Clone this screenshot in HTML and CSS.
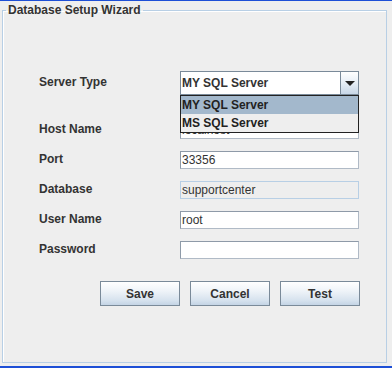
FILE: index.html
```html
<!DOCTYPE html>
<html lang="en">
<head>
    <meta charset="UTF-8">
    <meta name="viewport" content="width=device-width, initial-scale=1.0">
    <link rel="stylesheet" href="styles.css">
    <title>Database Setup Wizard</title>
</head>
<body>

<div class="window">
    <fieldset class="wizard">
        <legend>Database Setup Wizard</legend>

        <div class="form">
            <div class="row row-first">
                <label>Server Type</label>
                <div class="combo">
                    <div class="combo-box">
                        <span class="combo-value">MY SQL Server</span>
                        <span class="combo-btn">
                            <svg width="10" height="5" viewBox="0 0 10 5"><path d="M0 0 H10 L5 5 Z" fill="#222"/></svg>
                        </span>
                    </div>
                    <ul class="combo-list">
                        <li class="selected">MY SQL Server</li>
                        <li>MS SQL Server</li>
                    </ul>
                </div>
            </div>
            <div class="row">
                <label>Host Name</label>
                <input type="text" class="field" value="localhost">
            </div>
            <div class="row">
                <label>Port</label>
                <input type="text" class="field" value="33356">
            </div>
            <div class="row">
                <label>Database</label>
                <input type="text" class="field readonly" value="supportcenter" readonly>
            </div>
            <div class="row">
                <label>User Name</label>
                <input type="text" class="field" value="root">
            </div>
            <div class="row">
                <label>Password</label>
                <input type="password" class="field" value="">
            </div>
        </div>

        <div class="buttons">
            <button>Save</button>
            <button>Cancel</button>
            <button>Test</button>
        </div>
    </fieldset>
</div>

</body>
</html>
```

FILE: styles.css
```css
* {
    box-sizing: border-box;
}

html, body {
    height: 100%;
}

body {
    margin: 0;
    font-family: "Liberation Sans", Arial, sans-serif;
    font-size: 12px;
    color: #333333;
    background-color: #eeeeee;
}

.window {
    height: 100%;
    border-top: 1px solid #1d4fd6;
    border-bottom: 2px solid #1d4fd6;
    padding: 2px 5px 3px 2px;
    display: flex;
}

.wizard {
    flex: 1;
    margin: 0;
    padding: 0;
    border: 1px solid #b8cfe5;
    box-shadow: inset 1px 1px 0 #ffffff;
    min-width: 0;
}

.wizard legend {
    margin-left: 3px;
    padding: 0 2px;
    font-weight: bold;
    line-height: 14px;
    color: #333333;
}

.form {
    padding: 54px 0 0 36px;
}

.row {
    display: flex;
    align-items: center;
    margin-bottom: 12px;
}

.row-first {
    margin-bottom: 26px;
}

.row label {
    width: 141px;
    font-weight: bold;
    line-height: 14px;
    padding-bottom: 3px;
}

.field {
    width: 179px;
    height: 18px;
    margin: 0;
    padding: 0 1px;
    border: 1px solid #8e9aa8;
    border-right-color: #b0bac6;
    border-bottom-color: #b0bac6;
    background-color: #ffffff;
    font-family: "Liberation Sans", Arial, sans-serif;
    font-size: 12px;
    color: #333333;
    outline: none;
}

.field.readonly {
    background-color: #eeeeee;
    border-color: #b8cfe5;
}

.combo {
    position: relative;
    width: 179px;
}

.combo-box {
    height: 24px;
    display: flex;
    border: 1px solid #7a8a99;
    background-color: #ffffff;
}

.combo-value {
    flex: 1;
    padding-left: 1px;
    font-weight: bold;
    line-height: 22px;
}

.combo-btn {
    width: 18px;
    border-left: 1px solid #7a8a99;
    background: linear-gradient(to bottom, #ffffff 0%, #e6eef6 50%, #c8d7e7 100%);
    display: flex;
    align-items: center;
    justify-content: center;
}

.combo-list {
    position: absolute;
    top: 100%;
    left: 0;
    width: 179px;
    margin: 0;
    padding: 0;
    list-style: none;
    border: 1px solid #222222;
    background-color: #eeeeee;
}

.combo-list li {
    height: 18px;
    line-height: 18px;
    padding-left: 1px;
    font-weight: bold;
    color: #222222;
}

.combo-list li.selected {
    background-color: #a3b8cc;
}

.buttons {
    display: flex;
    gap: 10px;
    padding: 10px 0 0 97px;
}

.buttons button {
    width: 80px;
    height: 25px;
    margin: 0;
    padding: 0;
    border: 1px solid #7a8a99;
    background: linear-gradient(to bottom, #ffffff 0%, #eef3f8 40%, #d6e2ee 80%, #c4d4e5 100%);
    font-family: "Liberation Sans", Arial, sans-serif;
    font-size: 12px;
    font-weight: bold;
    color: #333333;
}
```
